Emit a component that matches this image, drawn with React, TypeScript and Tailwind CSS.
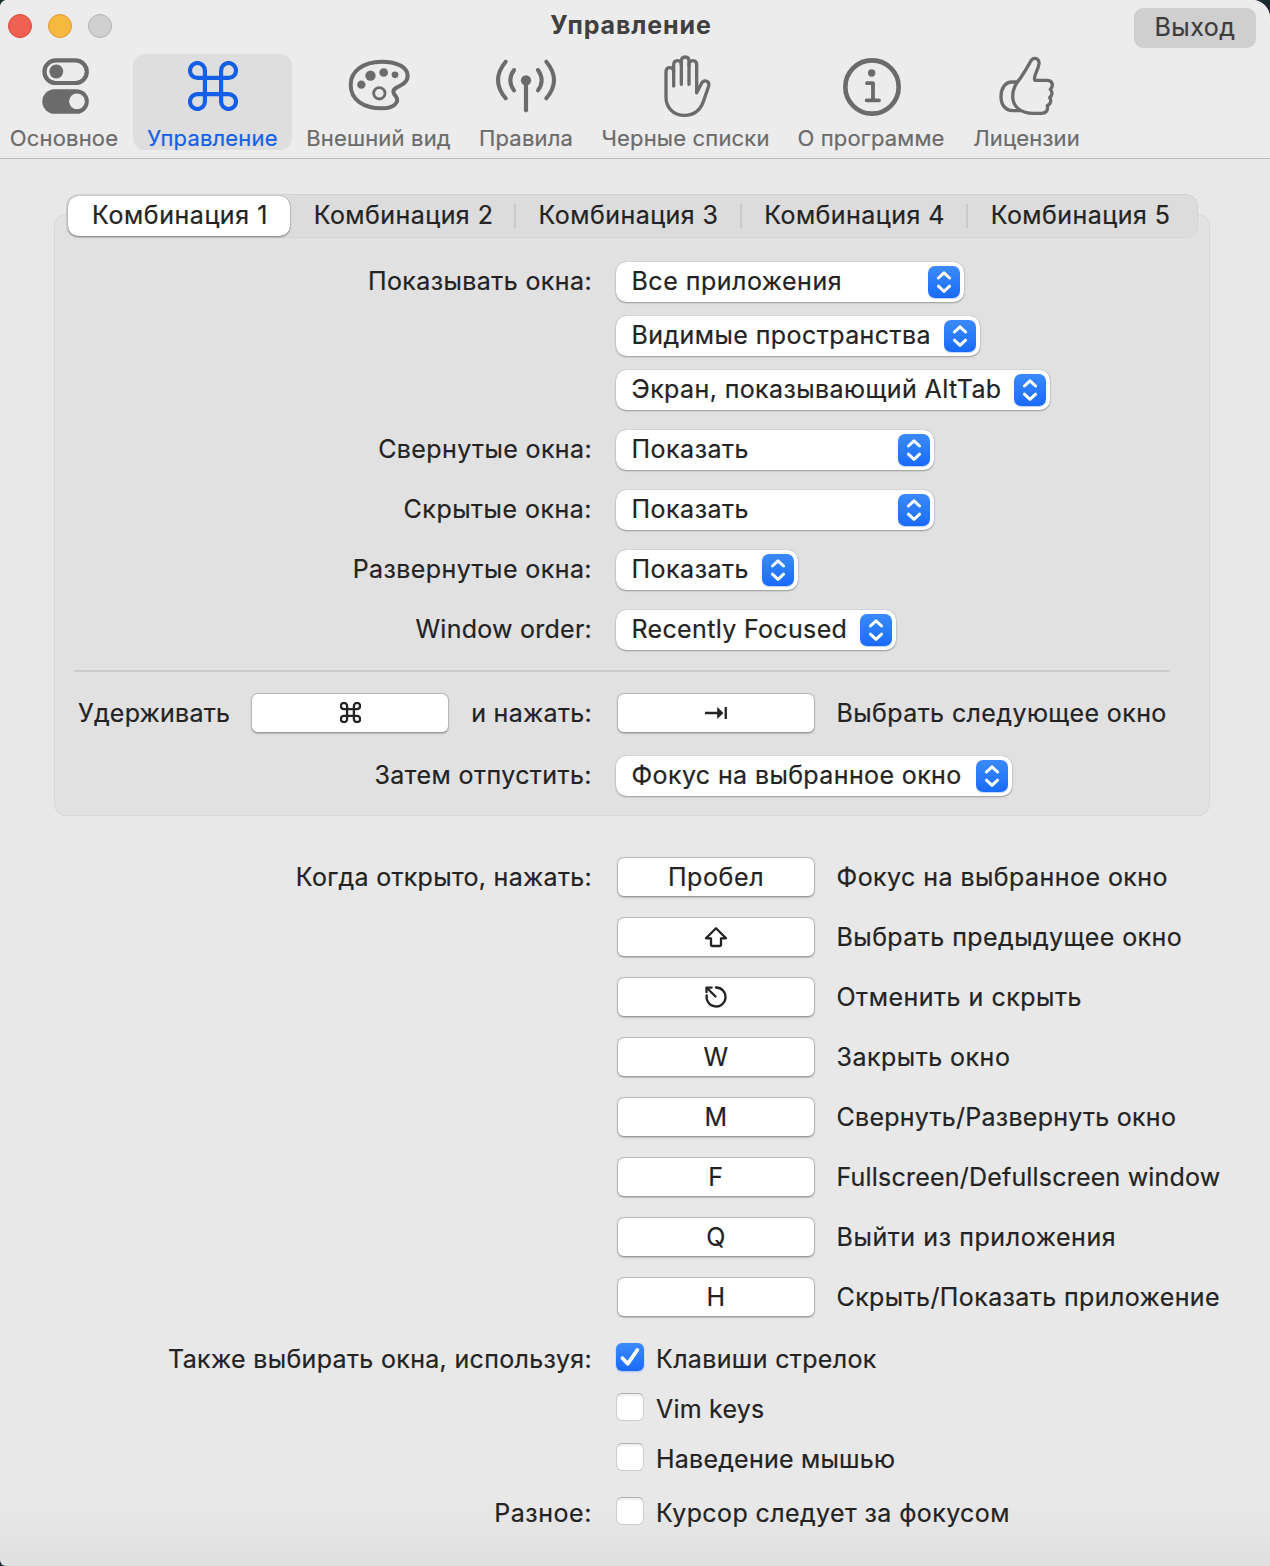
import React, { type ReactNode } from "react";

/* ---------- toolbar icons ---------- */

function TogglesIcon() {
  return (
    <svg width="47" height="57" viewBox="0 0 47 57" fill="none" className="ml-[3px]">
      <rect x="2.4" y="2.4" width="42.4" height="22.6" rx="11.3" stroke="currentColor" strokeWidth="4.2" />
      <circle cx="14.3" cy="13.5" r="6.9" fill="currentColor" />
      <rect x="0.3" y="31.2" width="46.5" height="24.6" rx="12.3" fill="currentColor" />
      <circle cx="35" cy="43.3" r="7.9" fill="#ececec" />
    </svg>
  );
}

function CommandIcon({ size, stroke }: { size: number; stroke: number }) {
  return (
    <svg width={size} height={size} viewBox="0 0 50.3 50.3" fill="none">
      <path
        d="M17 9.5A7.5 7.5 0 1 0 9.5 17H40.8A7.5 7.5 0 1 0 33.3 9.5V40.8A7.5 7.5 0 1 0 40.8 33.3H9.5A7.5 7.5 0 1 0 17 40.8Z"
        stroke="currentColor"
        strokeWidth={stroke}
      />
    </svg>
  );
}

function PaletteIcon() {
  return (
    <svg width="62" height="52" viewBox="144 58 186 156" fill="none" className="mb-[2px]">
      <path
        d="M152 135C152 95 190 66 245 66C295 66 323 85 323 108C323 130 302 137 289 144C275 152 280 162 288 171C298 186 285 206 245 206C190 206 152 180 152 135Z"
        stroke="currentColor"
        strokeWidth="12"
      />
      <g fill="currentColor">
        <circle cx="184" cy="135" r="12.5" />
        <circle cx="211.5" cy="108" r="15.5" />
        <circle cx="251" cy="98.5" r="13" />
        <circle cx="285" cy="105.5" r="10" />
      </g>
      <circle cx="238" cy="161" r="17" stroke="currentColor" strokeWidth="8.5" />
    </svg>
  );
}

function AntennaIcon() {
  return (
    <svg width="62" height="54" viewBox="585 57 186 162" fill="none" stroke="currentColor" strokeWidth="12" strokeLinecap="round">
      <path d="M678 121V211" strokeWidth="12.5" />
      <circle cx="678" cy="121" r="15.5" fill="currentColor" stroke="none" />
      <path d="M642 90Q620 121 642 151M714 90Q736 121 714 151" />
      <path d="M617 65Q571 120 617 175M739 65Q785 120 739 175" />
    </svg>
  );
}

function HandIcon() {
  return (
    <svg width="49" height="64" viewBox="219 42 147 192" fill="none" stroke="currentColor" strokeWidth="10" strokeLinecap="round" strokeLinejoin="round" className="ml-[3px]">
      <path d="M251 95Q251 83 239.5 83Q228 83 228 95V172C228 200 247 226 284 226C312 226 330 212 340 185L356 138C360 122 341 117 334 131L320 158V75Q320 62 308.5 62Q297 62 297 75" />
      <path d="M251 138V75Q251 62 262.5 62Q274 62 274 75" />
      <path d="M274 133V64Q274 51 285.5 51Q297 51 297 64V133" />
    </svg>
  );
}

function InfoIcon() {
  return (
    <svg width="60" height="60" viewBox="36 170 180 180" fill="none" stroke="currentColor" className="mt-[1px] ml-[2px]">
      <circle cx="126" cy="260" r="80" strokeWidth="14" />
      <circle cx="125" cy="218" r="11" fill="currentColor" stroke="none" />
      <path d="M111 248.5H129V299M110 300H147" strokeWidth="11.5" strokeLinecap="round" strokeLinejoin="round" />
    </svg>
  );
}

function ThumbIcon() {
  return (
    <svg width="57" height="61" viewBox="505 166 171 183" fill="none" stroke="currentColor" strokeWidth="10" strokeLinecap="round" strokeLinejoin="round">
      <path d="M603 182C611 167 629 172 628 189C626 210 608 228 616 239H651C670 239 672 256 662 266C669 274 668 285 660 291C666 300 663 311 653 315C656 330 649 338 635 338H612C575 338 549 320 549 287C549 260 562 246 573 231C585 214 594 199 603 182Z" />
      <path d="M562 244H547C525 244 514 265 514 288C514 312 527 330 550 330H570" />
    </svg>
  );
}

/* ---------- key glyphs ---------- */

function TabGlyph() {
  return (
    <svg width="24" height="14" viewBox="0 0 24 14" fill="currentColor">
      <path d="M1 5.8H13.2V1L19.4 7L13.2 13V8.2H1Z" />
      <rect x="20.6" y="1" width="2.3" height="12" />
    </svg>
  );
}

function ShiftGlyph() {
  return (
    <svg width="24" height="22" viewBox="0 0 24 22" fill="none" stroke="currentColor" strokeWidth="2.3" strokeLinejoin="round" className="mt-px">
      <path d="M12 2.2L22 12.3H17V18.5Q17 20 15.5 20H8.5Q7 20 7 18.5V12.3H2Z" />
    </svg>
  );
}

function EscapeGlyph() {
  return (
    <svg width="24" height="24" viewBox="0 0 24 24" fill="none" stroke="currentColor" strokeWidth="2.3" strokeLinecap="round" className="mt-px">
      <path d="M12 2.5A9.5 9.5 0 1 1 2.7 10.3" />
      <path d="M11.5 11.5L4 4" />
      <path d="M2.5 7.2V2.6H7.6" strokeLinejoin="round" />
    </svg>
  );
}

/* ---------- controls ---------- */

function ToolbarItem({ label, width, icon, active = false }: { label: string; width: string; icon: ReactNode; active?: boolean }) {
  return (
    <div
      className={`flex h-24 flex-col items-center rounded-xl ${width} ${active ? "bg-[#dedede] text-[#155fe6]" : "text-[#6b6b6b]"}`}
    >
      <div className="flex h-16 shrink-0 items-center justify-center">{icon}</div>
      <span className="mt-1.5 text-[22px] leading-7 tracking-[0.17px] whitespace-nowrap">{label}</span>
    </div>
  );
}

function Popup({ value, width, tracking = "tracking-[0.42px]" }: { value: string; width: string; tracking?: string }) {
  return (
    <button
      className={`flex h-10 items-center justify-between rounded-[10px] bg-white pr-1 pl-[15.5px] shadow-[0_0_1px_rgba(0,0,0,0.35),0_1px_2px_rgba(0,0,0,0.3)] ${width}`}
    >
      <span className={`pb-0.5 whitespace-nowrap ${tracking}`}>{value}</span>
      <span className="flex size-8 shrink-0 items-center justify-center rounded-[7px] bg-linear-to-b from-[#3b8afb] to-[#1a6afa] shadow-[0_1px_1px_rgba(30,110,250,0.3)]">
        <svg width="32" height="32" viewBox="0 0 32 32" fill="none" stroke="white" strokeWidth="3" strokeLinecap="round" strokeLinejoin="round">
          <path d="M10.4 12L16 6.8L21.6 12M10.4 20.2L16 25.4L21.6 20.2" />
        </svg>
      </span>
    </button>
  );
}

function KeyField({ children }: { children: ReactNode }) {
  return (
    <div className="flex h-10 w-[198px] shrink-0 items-center justify-center rounded-[7px] border border-[#b8b8b8] border-b-[#9c9c9c] bg-white pb-px tracking-[0.6px] shadow-[0_1px_1.5px_rgba(0,0,0,0.2)]">
      {children}
    </div>
  );
}

function Checkbox({ label, checked = false, tracking }: { label: string; checked?: boolean; tracking: string }) {
  return (
    <div className="flex h-7 items-center">
      {checked ? (
        <span className="size-7 rounded-[6px] bg-linear-to-b from-[#3b8afb] to-[#1a6afa] shadow-[0_1px_2px_rgba(30,110,250,0.35)]">
          <svg width="28" height="28" viewBox="0 0 28 28" fill="none" stroke="white" strokeWidth="3.8" strokeLinecap="round" strokeLinejoin="round">
            <path d="M6.5 15.2L11.7 20.8L21.3 7" />
          </svg>
        </span>
      ) : (
        <span className="size-7 rounded-[6px] border border-x-[#cdcdcd] border-t-[#b0b0b0] border-b-[#cacaca] bg-white shadow-[inset_0_2px_2px_rgba(0,0,0,0.07)]" />
      )}
      <span className={`ml-3 pt-1 whitespace-nowrap ${tracking}`}>{label}</span>
    </div>
  );
}

/* A right-aligned caption followed by its control. */
function Row({ label = "", labelWidth, tracking = "tracking-[0.4px]", children }: { label?: string; labelWidth: string; tracking?: string; children: ReactNode }) {
  return (
    <div className="flex items-center">
      <span className={`shrink-0 text-right whitespace-nowrap ${labelWidth} ${tracking}`}>{label}</span>
      <div className="ml-6 flex items-center">{children}</div>
    </div>
  );
}

const GROUP_LABEL = "w-[537px] pb-0.5";
const PAGE_LABEL = "w-[592px] pb-px";

const segments = [
  { label: "Комбинация 1", style: "w-[222px] pl-0.5 rounded-[10px] bg-white tracking-[0.55px] shadow-[0_0_1px_rgba(0,0,0,0.5),0_1px_2px_rgba(0,0,0,0.4)]", divider: false },
  { label: "Комбинация 2", style: "w-[225px] pl-0.5 tracking-[0.45px]", divider: true },
  { label: "Комбинация 3", style: "w-[226px] pl-px tracking-[0.45px]", divider: true },
  { label: "Комбинация 4", style: "w-[226px] pl-px tracking-[0.45px]", divider: true },
  { label: "Комбинация 5", style: "w-[227px] tracking-[0.45px]", divider: false },
];

const shortcuts: { key: ReactNode; label: string; tracking: string }[] = [
  { key: "Пробел", label: "Фокус на выбранное окно", tracking: "tracking-[0.44px]" },
  { key: <ShiftGlyph />, label: "Выбрать предыдущее окно", tracking: "tracking-[0.43px]" },
  { key: <EscapeGlyph />, label: "Отменить и скрыть", tracking: "tracking-[0.5px]" },
  { key: "W", label: "Закрыть окно", tracking: "tracking-[0.48px]" },
  { key: "M", label: "Свернуть/Развернуть окно", tracking: "tracking-[0.26px]" },
  { key: "F", label: "Fullscreen/Defullscreen window", tracking: "tracking-[0.2px]" },
  { key: "Q", label: "Выйти из приложения", tracking: "tracking-[0.57px]" },
  { key: "H", label: "Скрыть/Показать приложение", tracking: "tracking-[0.4px]" },
];

export default function App() {
  return (
    <div className="h-[1566px] w-[1270px] overflow-hidden bg-[#1b2a2e] font-['Inter',sans-serif] text-[25px] leading-8 text-[#232323] [-webkit-text-stroke:0.2px_currentColor]">
      <div className="flex h-full flex-col overflow-hidden rounded-tl-[7px] rounded-tr-[18px] rounded-bl-[6px] bg-[#e8e8e8] bg-[linear-gradient(to_bottom,#e8e8e8_1505px,#dfdfdf_1566px)]">
        <header className="h-[159px] shrink-0 border-b border-[#bcbcbc] bg-[#ececec]">
          <div className="grid h-[54px] grid-cols-[1fr_auto_1fr] items-start pr-3.5 pl-2">
            <div className="flex gap-4 pt-3.5">
              <span className="size-6 rounded-full border border-[#d9493c] bg-[#ef6152]" />
              <span className="size-6 rounded-full border border-[#dc9a34] bg-[#f7b840]" />
              <span className="size-6 rounded-full border border-[#b3b3b3] bg-[#d0d0d0]" />
            </div>
            <h1 className="pt-[9px] pr-[2px] font-bold tracking-[0.9px] text-[#404040] [-webkit-text-stroke:0]">Управление</h1>
            <button className="mt-2 flex h-10 w-[122px] items-center justify-center self-start justify-self-end rounded-[9px] bg-[#cfcfcf] pb-0.5 tracking-[0.5px] text-[#3c3c3c]">
              Выход
            </button>
          </div>
          <nav className="flex">
            <ToolbarItem label="Основное" width="w-32 mr-[5px]" icon={<TogglesIcon />} />
            <ToolbarItem label="Управление" width="w-[159px]" icon={<CommandIcon size={50} stroke={4.2} />} active />
            <ToolbarItem label="Внешний вид" width="w-[173px]" icon={<PaletteIcon />} />
            <ToolbarItem label="Правила" width="w-[122px]" icon={<AntennaIcon />} />
            <ToolbarItem label="Черные списки" width="w-[197px]" icon={<HandIcon />} />
            <ToolbarItem label="О программе" width="w-[174px]" icon={<InfoIcon />} />
            <ToolbarItem label="Лицензии" width="w-[137px]" icon={<ThumbIcon />} />
          </nav>
        </header>

        <div className="relative z-10 mt-[35px] ml-[66px] flex h-11 w-[1132px] shrink-0 rounded-xl border border-[#d2d2d2] bg-[#dcdcdc] p-px">
          {segments.map((s) => (
            <div key={s.label} className={`relative flex h-10 items-center justify-center pb-[3px] whitespace-nowrap ${s.style}`}>
              {s.label}
              {s.divider && <span className="absolute top-2 -right-px h-6 w-0.5 bg-[#c9c9c9]" />}
            </div>
          ))}
        </div>

        <section className="-mt-6 ml-[54px] h-[602px] w-[1156px] shrink-0 rounded-xl border border-[#d7d7d7] bg-[#e1e1e1] pt-[47px]">
          <div className="flex flex-col gap-5">
            <div className="flex flex-col gap-3.5">
              <Row label="Показывать окна:" labelWidth={GROUP_LABEL}>
                <Popup value="Все приложения" width="w-[348px]" tracking="tracking-[0.5px]" />
              </Row>
              <Row labelWidth={GROUP_LABEL}>
                <Popup value="Видимые пространства" width="w-[364px]" />
              </Row>
              <Row labelWidth={GROUP_LABEL}>
                <Popup value="Экран, показывающий AltTab" width="w-[434px]" tracking="tracking-[0.39px]" />
              </Row>
            </div>
            <Row label="Свернутые окна:" labelWidth={GROUP_LABEL} tracking="tracking-[0.38px]">
              <Popup value="Показать" width="w-[318px]" tracking="tracking-[0.5px]" />
            </Row>
            <Row label="Скрытые окна:" labelWidth={GROUP_LABEL} tracking="tracking-[0.48px]">
              <Popup value="Показать" width="w-[318px]" tracking="tracking-[0.5px]" />
            </Row>
            <Row label="Развернутые окна:" labelWidth={GROUP_LABEL} tracking="tracking-[0.42px]">
              <Popup value="Показать" width="w-[182px]" tracking="tracking-[0.5px]" />
            </Row>
            <Row label="Window order:" labelWidth={GROUP_LABEL} tracking="tracking-[0.25px]">
              <Popup value="Recently Focused" width="w-[280px]" tracking="tracking-[0.34px]" />
            </Row>
          </div>

          <div className="mt-5 ml-[19px] h-0.5 w-[1096px] bg-[#cccccc]" />

          <div className="mt-[21px] flex items-center">
            <span className="w-[196px] pb-px pl-[23px] tracking-[0.22px]">Удерживать</span>
            <KeyField>
              <CommandIcon size={21} stroke={5.6} />
            </KeyField>
            <span className="w-[143px] pb-px text-right tracking-[0.3px]">и нажать:</span>
            <span className="ml-[25px]">
              <KeyField>
                <TabGlyph />
              </KeyField>
            </span>
            <span className="ml-[21.5px] pb-px tracking-[0.4px]">Выбрать следующее окно</span>
          </div>

          <div className="mt-[23px]">
            <Row label="Затем отпустить:" labelWidth={GROUP_LABEL} tracking="tracking-[0.42px]">
              <Popup value="Фокус на выбранное окно" width="w-[396px]" tracking="tracking-[0.38px]" />
            </Row>
          </div>
        </section>

        <section className="mt-[41px] flex flex-col gap-5">
          {shortcuts.map((s, i) => (
            <Row key={s.label} label={i === 0 ? "Когда открыто, нажать:" : ""} labelWidth={PAGE_LABEL} tracking="tracking-[0.3px]">
              <span className="ml-px">
                <KeyField>{s.key}</KeyField>
              </span>
              <span className={`ml-[21.5px] pb-px whitespace-nowrap ${s.tracking}`}>{s.label}</span>
            </Row>
          ))}
        </section>

        <section className="mt-[26px] flex">
          <div className="w-[592px] text-right tracking-[0.33px]">Также выбирать окна, используя:</div>
          <div className="ml-6 flex flex-col gap-[22px]">
            <Checkbox label="Клавиши стрелок" checked tracking="tracking-[0.34px]" />
            <Checkbox label="Vim keys" tracking="tracking-[0.2px]" />
            <Checkbox label="Наведение мышью" tracking="tracking-[0.22px]" />
          </div>
        </section>
        <section className="mt-[26px] flex">
          <div className="w-[592px] text-right tracking-[0.55px]">Разное:</div>
          <div className="ml-6">
            <Checkbox label="Курсор следует за фокусом" tracking="tracking-[0.4px]" />
          </div>
        </section>
      </div>
    </div>
  );
}
